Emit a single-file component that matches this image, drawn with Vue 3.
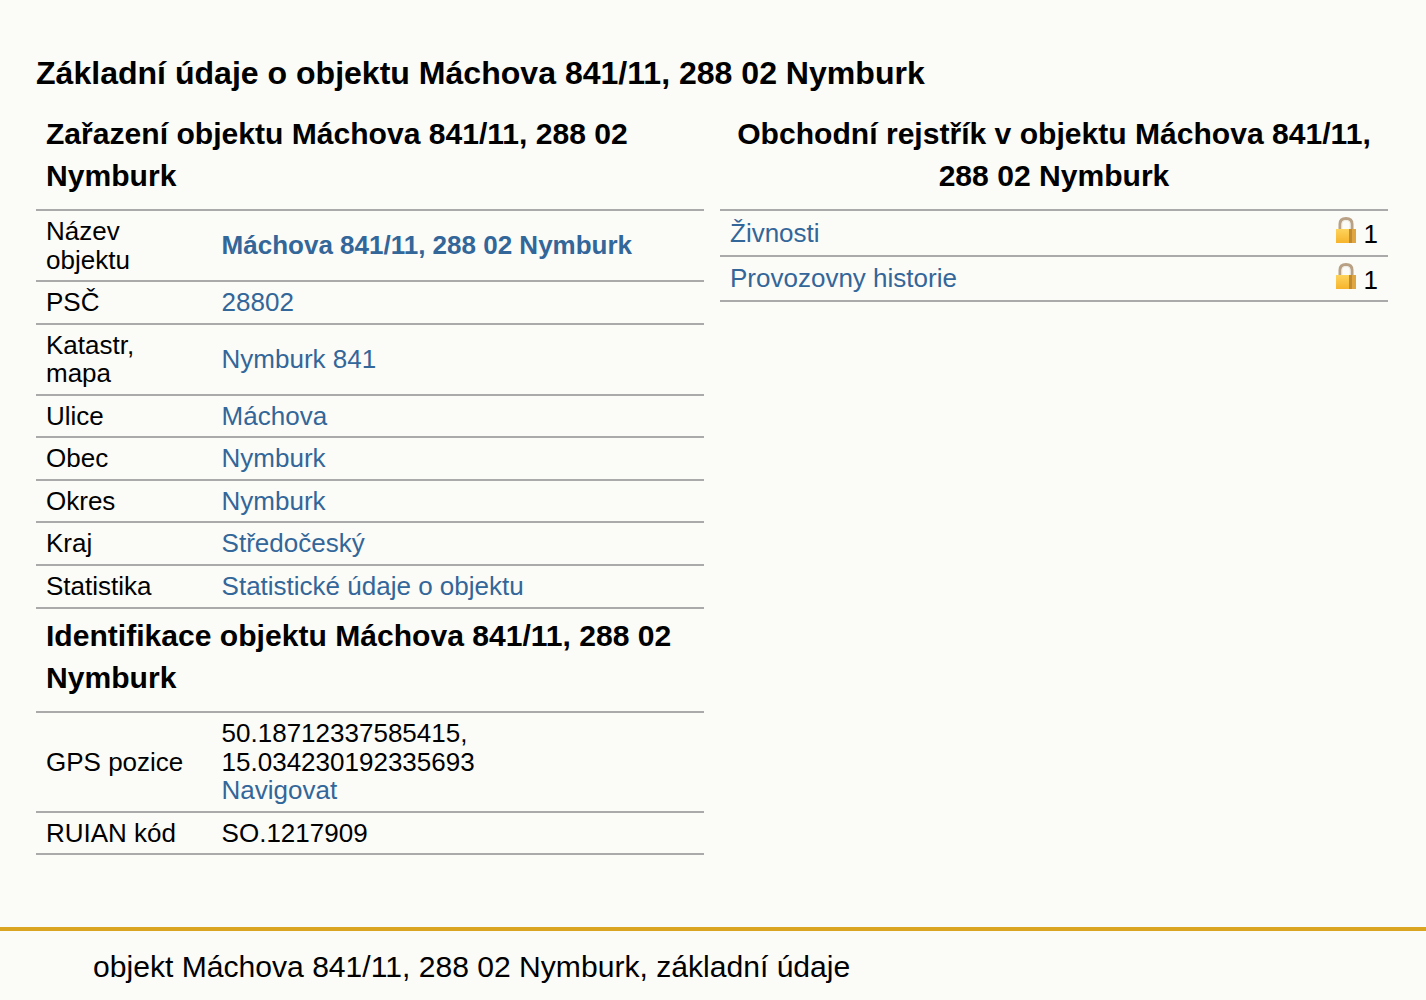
<script setup>
const main = [
  ['Název objektu', 'Máchova 841/11, 288 02 Nymburk', true],
  ['PSČ', '28802'],
  ['Katastr, mapa', 'Nymburk 841'],
  ['Ulice', 'Máchova'],
  ['Obec', 'Nymburk'],
  ['Okres', 'Nymburk'],
  ['Kraj', 'Středočeský'],
  ['Statistika', 'Statistické údaje o objektu'],
]
const side = ['Živnosti', 'Provozovny historie']
</script>

<template>
  <div class="page">
    <main class="content">
      <h1>Základní údaje o objektu Máchova 841/11, 288 02 Nymburk</h1>
      <div class="cols">
        <section>
          <h2>Zařazení objektu Máchova 841/11, 288 02 Nymburk</h2>
          <table class="first">
            <tbody>
              <tr v-for="r in main" :key="r[0]">
                <td class="label">{{ r[0] }}</td>
                <td><a :class="{ strong: r[2] }">{{ r[1] }}</a></td>
              </tr>
            </tbody>
          </table>
          <h2 class="second">Identifikace objektu Máchova 841/11, 288 02 Nymburk</h2>
          <table>
            <tbody>
              <tr>
                <td class="label">GPS pozice</td>
                <td>50.18712337585415, 15.034230192335693<br /><a>Navigovat</a></td>
              </tr>
              <tr>
                <td class="label">RUIAN kód</td>
                <td>SO.1217909</td>
              </tr>
            </tbody>
          </table>
        </section>
        <section>
          <h2 class="center">Obchodní rejstřík v objektu Máchova 841/11, 288 02 Nymburk</h2>
          <table>
            <tbody>
              <tr v-for="s in side" :key="s">
                <td class="name"><a>{{ s }}</a></td>
                <td class="count">
                  <svg class="lock" viewBox="0 0 20 26" width="20" height="26" aria-hidden="true">
                    <defs>
                      <linearGradient id="lockBody" x1="0" x2="0" y1="0" y2="1">
                        <stop offset="0" stop-color="#fdd45c" />
                        <stop offset="1" stop-color="#f6b42c" />
                      </linearGradient>
                    </defs>
                    <path d="M4 13V7C4 3 6.500 1.500 10 1.500S16 3 16 7V13" fill="none" stroke="#b8a184" stroke-width="3" />
                    <path d="M6 13V7.500C6 5 7.500 3.500 10 3.500S14 5 14 7.500V13" fill="none" stroke="#f1ece2" stroke-width="1" />
                    <rect x="0" y="12" width="20" height="14" fill="url(#lockBody)" />
                    <rect x="13" y="12" width="3" height="14" fill="#c08a35" />
                    <rect x="16" y="12" width="4" height="14" fill="#dfa540" />
                  </svg>
                  <span>1</span>
                </td>
              </tr>
            </tbody>
          </table>
        </section>
      </div>
    </main>
    <footer>objekt Máchova 841/11, 288 02 Nymburk, základní údaje</footer>
  </div>
</template>

<style>
html, body { margin: 0; background: #fbfbf7; }
</style>

<style scoped>
.page {
  font-family: "Liberation Sans", Arial, sans-serif;
  font-size: 26px;
  color: #000;
  background: #fbfbf7;
  height: 1000px;
  overflow: hidden;
}
.content { padding: 52px 38px 0 36px; height: 875px; }
h1 { margin: 0 0 18px; font-size: 32.05px; line-height: 42px; font-weight: bold; }
.cols { display: grid; grid-template-columns: 668px 668px; gap: 16px; }
h2 { margin: 0; padding: 1px 10px 12px; font-size: 30.08px; line-height: 42px; font-weight: bold; }
h2.center { text-align: center; }
h2.second { padding-top: 6px; }
table { width: 100%; border-collapse: collapse; border-bottom: 2px solid #aaa; }
td { padding: 6px 10px; border-top: 2px solid #aaa; vertical-align: middle; line-height: 28.55px; }
.first tr:last-child td { padding-bottom: 6.6px; }
.label { width: 155.6px; }
a { color: #336699; }
a.strong { font-weight: bold; }
.count { text-align: right; white-space: nowrap; padding-top: 9px; padding-bottom: 6px; }
.lock { vertical-align: 0; margin-top: -6px; margin-right: 8px; }
.name { padding-top: 7.4px; padding-bottom: 7.4px; }
footer {
  border-top: 4px solid #daa520;
  padding: 18px 93px;
  font-size: 30.1px;
  line-height: 35px;
}
</style>
